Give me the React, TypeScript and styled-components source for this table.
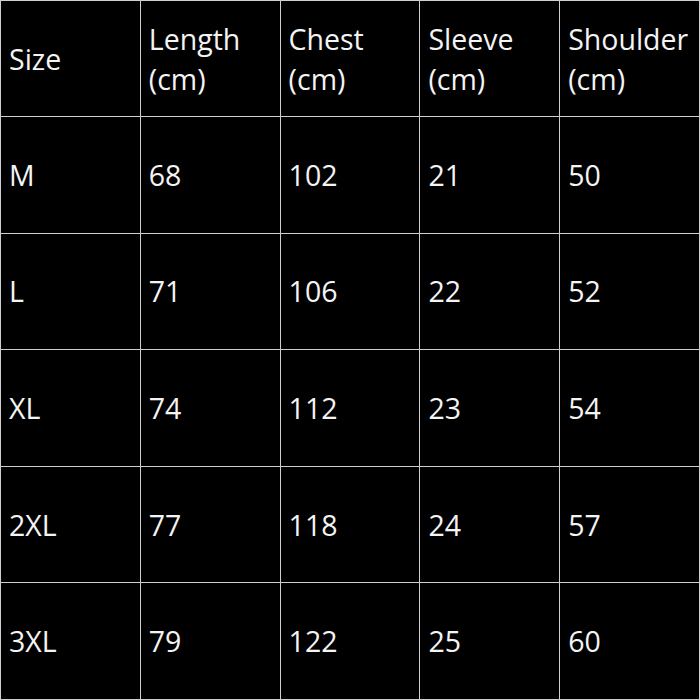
import React from 'react';
import styled, {createGlobalStyle} from 'styled-components';

const headers = ['Size', 'Length (cm)', 'Chest (cm)', 'Sleeve (cm)', 'Shoulder (cm)'];

const rows = [
    ['M', '68', '102', '21', '50'],
    ['L', '71', '106', '22', '52'],
    ['XL', '74', '112', '23', '54'],
    ['2XL', '77', '118', '24', '57'],
    ['3XL', '79', '122', '25', '60'],
];

const App = () => {
    return (
        <>
            <GlobalStyle/>
            <Page>
                <Table>
                    <thead>
                    <tr>
                        {headers.map(h => {
                            const [name, unit] = h.split(' ');
                            return (
                                <Head key={h}>
                                    {name}
                                    {unit && <><br/>{unit}</>}
                                </Head>
                            );
                        })}
                    </tr>
                    </thead>
                    <tbody>
                    {rows.map(row => (
                        <tr key={row[0]}>
                            {row.map((cell, i) => <Cell key={i}>{cell}</Cell>)}
                        </tr>
                    ))}
                    </tbody>
                </Table>
            </Page>
        </>
    );
};

export default App;

const GlobalStyle = createGlobalStyle`
    html, body {
        margin: 0;
        padding: 0;
        background: #000;
    }
`

const Page = styled.div`
    width: 700px;
    height: 700px;
    background: #000;
    overflow: hidden;
`

const Table = styled.table`
    width: 700px;
    height: 700px;
    border-collapse: collapse;
    table-layout: fixed;
    font-family: "Open Sans", "Liberation Sans", sans-serif;
    font-size: 28.5px;
    line-height: 40px;
    color: #f4f4f4;
`

const Head = styled.th`
    border: 1px solid #cfcfcf;
    padding: 0 0 0 8px;
    text-align: left;
    font-weight: 400;
    vertical-align: middle;
    height: 115px;
    white-space: nowrap;
`

const Cell = styled.td`
    border: 1px solid #cfcfcf;
    padding: 0 0 0 8px;
    text-align: left;
    vertical-align: middle;
    height: 115px;
`
